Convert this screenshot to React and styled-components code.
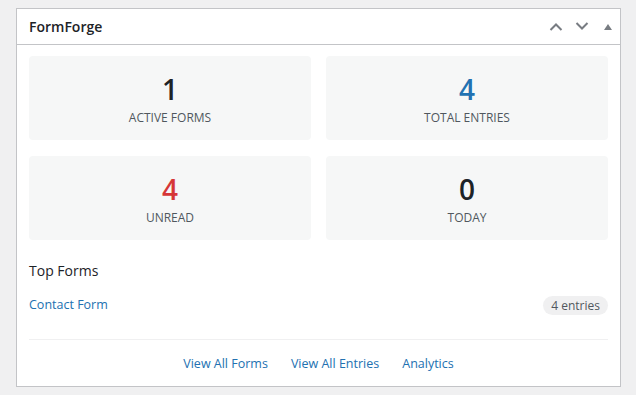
import React from "react";
import styled, { createGlobalStyle } from "styled-components";

const GlobalStyle = createGlobalStyle`
  body {
    margin: 0;
    background: #f0f0f1;
    font-family: "Open Sans", "Noto Sans", sans-serif;
    color: #1d2327;
  }
`;

const Panel = styled.section`
  margin: 8px 0 0 16px;
  width: 605px;
  box-sizing: border-box;
  background: #fff;
  border: 1px solid #c3c4c7;
`;

const Header = styled.header`
  display: flex;
  align-items: center;
  height: 35px;
  padding: 0 8px 0 12px;
  border-bottom: 1px solid #c3c4c7;
`;

const Title = styled.h2`
  margin: 0;
  flex: 1;
  font-size: 14px;
  font-weight: 600;
  color: #1d2327;
`;

const Controls = styled.div`
  display: flex;
  align-items: center;
  gap: 10px;
  color: #787c82;
`;

const IconButton = styled.span`
  display: flex;
  align-items: center;
  justify-content: center;
  width: ${(p) => p.$w || 16}px;
  height: 16px;
  margin-left: ${(p) => p.$offset || 0}px;
`;

const Body = styled.div`
  padding: 11px 12px 12px;
`;

const StatsGrid = styled.div`
  display: grid;
  grid-template-columns: 1fr 1fr;
  column-gap: 15px;
  row-gap: 16px;
`;

const StatCard = styled.div`
  display: flex;
  flex-direction: column;
  align-items: center;
  height: 84px;
  box-sizing: border-box;
  padding-top: 17px;
  background: #f6f7f7;
  border-radius: 4px;
`;

const StatValue = styled.div`
  font-size: 28px;
  font-weight: 600;
  line-height: 32px;
  color: ${(p) => p.$color || "#1d2327"};
`;

const StatLabel = styled.div`
  margin-top: 4px;
  font-size: 12px;
  line-height: 18px;
  text-transform: uppercase;
  color: #50575e;
`;

const SectionTitle = styled.h3`
  margin: 21px 0 0;
  font-size: 14px;
  font-weight: 400;
  line-height: 20px;
`;

const FormRow = styled.div`
  display: flex;
  align-items: center;
  justify-content: space-between;
  margin-top: 14px;
  height: 20px;
  padding-bottom: 24px;
  border-bottom: 1px solid #f0f0f1;
`;

const Link = styled.a`
  font-size: 12.5px;
  line-height: 20px;
  color: #2271b1;
  text-decoration: none;
`;

const Badge = styled.span`
  padding: 0 8px;
  height: 19px;
  line-height: 19px;
  border-radius: 10px;
  background: #f0f0f1;
  font-size: 12px;
  color: #50575e;
`;

const Footer = styled.nav`
  display: flex;
  justify-content: center;
  gap: 23px;
  padding-top: 14px;
`;

const Chevron = ({ up }) => (
  <svg width="14" height="9" viewBox="0 0 14 9">
    <path
      d={up ? "M1.5 8 L7 2.5 L12.5 8" : "M1.5 1 L7 6.5 L12.5 1"}
      fill="none"
      stroke="currentColor"
      strokeWidth="2"
    />
  </svg>
);

const stats = [
  { value: 1, label: "Active Forms" },
  { value: 4, label: "Total Entries", color: "#2271b1" },
  { value: 4, label: "Unread", color: "#d63638" },
  { value: 0, label: "Today" },
];

export default function App() {
  return (
    <>
      <GlobalStyle />
      <Panel>
        <Header>
          <Title>FormForge</Title>
          <Controls>
            <IconButton>
              <Chevron up />
            </IconButton>
            <IconButton>
              <Chevron />
            </IconButton>
            <IconButton $w={8} $offset={4}>
              <svg width="8" height="6" viewBox="0 0 8 6">
                <path d="M0 6 L4 0 L8 6 Z" fill="currentColor" />
              </svg>
            </IconButton>
          </Controls>
        </Header>
        <Body>
          <StatsGrid>
            {stats.map((s) => (
              <StatCard key={s.label}>
                <StatValue $color={s.color}>{s.value}</StatValue>
                <StatLabel>{s.label}</StatLabel>
              </StatCard>
            ))}
          </StatsGrid>
          <SectionTitle>Top Forms</SectionTitle>
          <FormRow>
            <Link href="#">Contact Form</Link>
            <Badge>4 entries</Badge>
          </FormRow>
          <Footer>
            <Link href="#">View All Forms</Link>
            <Link href="#">View All Entries</Link>
            <Link href="#">Analytics</Link>
          </Footer>
        </Body>
      </Panel>
    </>
  );
}
